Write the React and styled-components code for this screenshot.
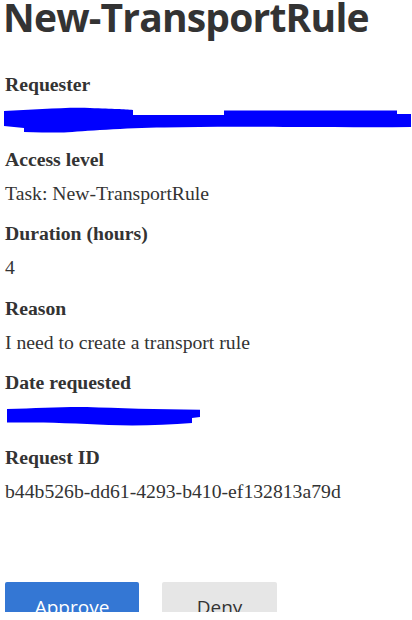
import React from "react";
import styled, { createGlobalStyle } from "styled-components";

const Global = createGlobalStyle`
  html, body { margin: 0; padding: 0; background: #fff; }
`;

const Page = styled.div`
  height: 612px;
  overflow: hidden;
  display: flex;
  flex-direction: column;
  padding-left: 5px;
  box-sizing: border-box;
`;

const Title = styled.h1`
  margin: 0 0 40px -2px;
  font-family: "Open Sans", "Noto Sans", sans-serif;
  font-weight: 700;
  font-size: 39px;
  line-height: 33px;
  color: #333;
  letter-spacing: -0.8px;
`;

const Details = styled.dl`
  margin: 0;
  display: flex;
  flex-direction: column;
  font-family: "Liberation Serif", "Times New Roman", serif;
  font-size: 19.7px;
  line-height: 23px;
  color: #333;
`;

const Label = styled.dt`
  font-weight: 700;
  margin: 0 0 11px;
`;

const Value = styled.dd`
  margin: 0 0 17.6px;
  height: 23px;
  position: relative;
`;

const Redaction = styled.svg`
  position: absolute;
  left: ${(p) => p.$left}px;
  top: ${(p) => p.$top}px;
  overflow: visible;
`;

const Actions = styled.div`
  margin-top: 61px;
  display: flex;
  gap: 23px;
`;

const Button = styled.button`
  width: ${(p) => p.$width}px;
  height: 50px;
  flex: none;
  border: none;
  border-radius: 2px;
  padding: 0;
  font-family: "Open Sans", "Noto Sans", sans-serif;
  font-size: 19px;
  line-height: 26px;
  background: ${(p) => (p.$primary ? "#3477d4" : "#e6e6e6")};
  color: ${(p) => (p.$primary ? "#fff" : "#333")};
  cursor: pointer;
`;

export default function App() {
  return (
    <>
      <Global />
      <Page>
        <Title>New-TransportRule</Title>
        <Details>
          <Label>Requester</Label>
          <Value>
            <Redaction $left={-1} $top={1} width="408" height="26" viewBox="0 0 408 26">
              <path
                d="M0 3 C30 2 60 -1 86 0 C110 1 120 1 129 2 L129 7 L220 7 L220 2.5 L393 2.5 L393 6 L407 6 L407 19 C370 19.5 330 19 290 19 C240 18.5 200 18.5 160 19.5 C120 20 80 23 60 24.5 L38 24.5 L20 24 L20 20 L0 18 Z"
                fill="#0000ff"
              />
            </Redaction>
          </Value>
          <Label>Access level</Label>
          <Value>Task: New-TransportRule</Value>
          <Label>Duration (hours)</Label>
          <Value>4</Value>
          <Label>Reason</Label>
          <Value>I need to create a transport rule</Value>
          <Label>Date requested</Label>
          <Value>
            <Redaction $left={2} $top={2} width="194" height="20" viewBox="0 0 194 20">
              <path
                d="M0 2 C30 1 60 -0.5 80 0 C110 1 150 2.5 193 2.7 L193 10 L185 11 L185 16 C150 19 110 19 80 17 C50 15.5 20 15.5 0 15.5 Z"
                fill="#0000ff"
              />
            </Redaction>
          </Value>
          <Label>Request ID</Label>
          <Value>b44b526b-dd61-4293-b410-ef132813a79d</Value>
        </Details>
        <Actions>
          <Button $primary $width={134}>Approve</Button>
          <Button $width={115}>Deny</Button>
        </Actions>
      </Page>
    </>
  );
}
